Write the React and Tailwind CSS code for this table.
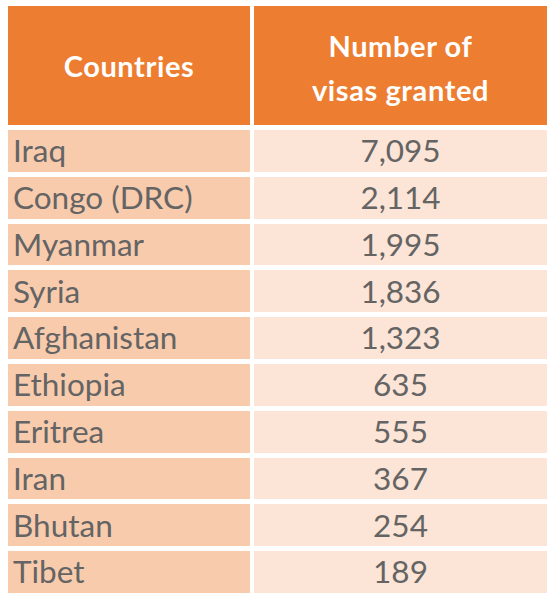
import React from 'react';

const rows = [
  ['Iraq', '7,095'],
  ['Congo (DRC)', '2,114'],
  ['Myanmar', '1,995'],
  ['Syria', '1,836'],
  ['Afghanistan', '1,323'],
  ['Ethiopia', '635'],
  ['Eritrea', '555'],
  ['Iran', '367'],
  ['Bhutan', '254'],
  ['Tibet', '189'],
];

export default function App() {
  return (
    <div className="w-[555px] h-[600px] bg-white pt-[6px] pl-[8px]" style={{ fontFamily: 'Lato, "Liberation Sans", sans-serif' }}>
      <div className="w-[539px] flex flex-col gap-[5px]">
        {/* header */}
        <div className="flex gap-[4px] h-[119px]">
          <div className="w-[242px] bg-[#ed7d31] flex items-center justify-center text-white font-bold text-[29px] tracking-[0.6px]">
            Countries
          </div>
          <div className="flex-1 bg-[#ed7d31] flex items-center justify-center text-center text-white font-bold text-[29px] tracking-[0.6px] leading-[44px] pt-[4px]">
            Number of<br />visas granted
          </div>
        </div>

        {rows.map(([country, visas]) => (
          <div key={country} className="flex gap-[4px] h-[41.8px] text-[#646464] text-[31.5px] leading-none">
            <div className="w-[242px] bg-[#f8cbad] flex items-center pl-[5px]">{country}</div>
            <div className="flex-1 bg-[#fce4d6] flex items-center justify-center">{visas}</div>
          </div>
        ))}
      </div>
    </div>
  );
}
